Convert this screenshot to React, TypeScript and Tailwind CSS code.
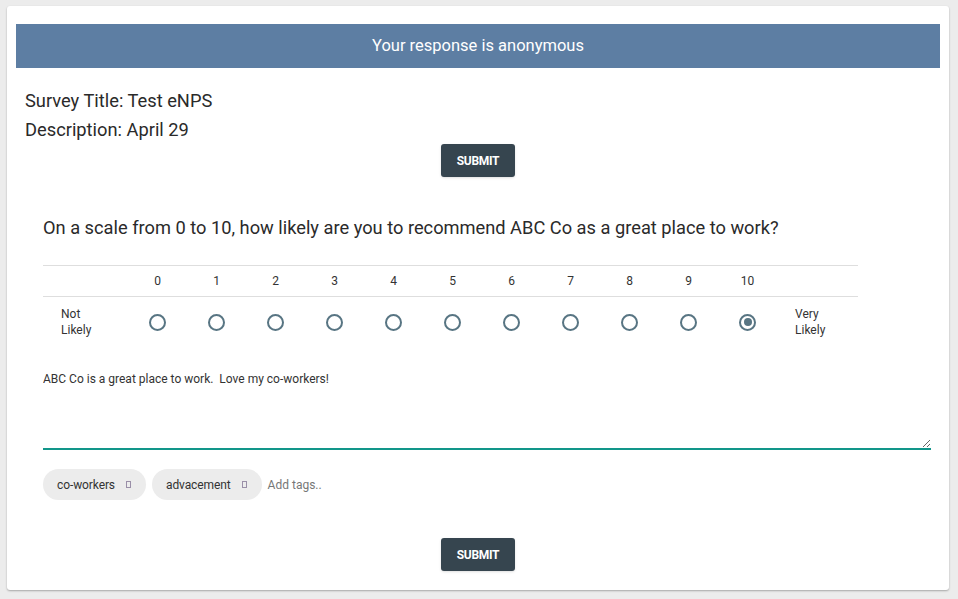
import { useState } from 'react';

const scale = [0, 1, 2, 3, 4, 5, 6, 7, 8, 9, 10];

function Radio({ checked, onClick }: { checked: boolean; onClick: () => void }) {
  return (
    <button
      onClick={onClick}
      className="w-[17px] h-[17px] rounded-full border-2 border-[#587583] flex items-center justify-center"
    >
      {checked && <span className="w-[8px] h-[8px] rounded-full bg-[#587583]" />}
    </button>
  );
}

function SubmitButton() {
  return (
    <button className="w-[74px] h-[33px] rounded-[3px] bg-[#36454f] text-white text-[12px] font-bold tracking-tight shadow-sm">
      SUBMIT
    </button>
  );
}

function Tag({ label }: { label: string }) {
  return (
    <span className="h-[31px] rounded-full bg-[#ececec] flex items-center pl-[14px] pr-[15px] gap-[11px] text-[12px] tracking-[-0.1px] text-[#333]">
      {label}
      <span className="w-[5px] h-[7px] border border-[#9a8fa8] inline-block" />
    </span>
  );
}

export default function App() {
  const [score, setScore] = useState(10);

  return (
    <div className="min-h-[599px] bg-[#ececec] pt-[6px] pl-[7px] pr-[9px] pb-[9px] font-['Roboto',sans-serif] text-[#333]">
      <div className="h-[584px] bg-white rounded-[3px] shadow-[0_1px_2px_rgba(0,0,0,0.3)] px-[9px] pt-[18px]">
        <div className="h-[44px] bg-[#5d7ea3] flex items-center justify-center text-white text-[16.5px]">
          Your response is anonymous
        </div>

        <div className="pl-[9px] pt-[18px] text-[18.3px] leading-[29px] text-[#2a2a2a]">
          <div>Survey Title: Test eNPS</div>
          <div>Description: April 29</div>
        </div>
        <div className="flex justify-center">
          <SubmitButton />
        </div>

        <div className="pl-[27px] pr-[9px]">
          <div className="mt-[39px] text-[18.25px] text-[#2a2a2a] leading-[24px]">
            On a scale from 0 to 10, how likely are you to recommend ABC Co as a great place to work?
          </div>

          <div className="mt-[25px] w-[815px] grid grid-cols-[85px_repeat(11,59px)_81px] text-[12px]">
            <div className="h-[32px] border-y border-[#dedede]" />
            {scale.map((n) => (
              <div key={n} className="h-[32px] border-y border-[#dedede] flex items-center justify-center">
                {n}
              </div>
            ))}
            <div className="h-[32px] border-y border-[#dedede]" />

            <div className="h-[50px] pl-[18px] flex items-center leading-[16px]">
              Not
              <br />
              Likely
            </div>
            {scale.map((n) => (
              <div key={n} className="h-[50px] flex items-center justify-center">
                <Radio checked={score === n} onClick={() => setScore(n)} />
              </div>
            ))}
            <div className="h-[50px] pl-[18px] flex items-center leading-[16px]">
              Very
              <br />
              Likely
            </div>
          </div>

          <textarea
            defaultValue="ABC Co is a great place to work.  Love my co-workers!"
            className="mt-[24px] block w-[888px] h-[79px] text-[12px] leading-[16px] text-[#333] border-b-2 border-[#12968a] outline-none resize-y"
          />

          <div className="mt-[19px] flex items-center gap-[6px]">
            <Tag label="co-workers" />
            <Tag label="advacement" />
            <span className="text-[12px] text-[#777]">Add tags..</span>
          </div>

          <div className="flex justify-center mt-[38px] -ml-[18px]">
            <SubmitButton />
          </div>
        </div>
      </div>
    </div>
  );
}
